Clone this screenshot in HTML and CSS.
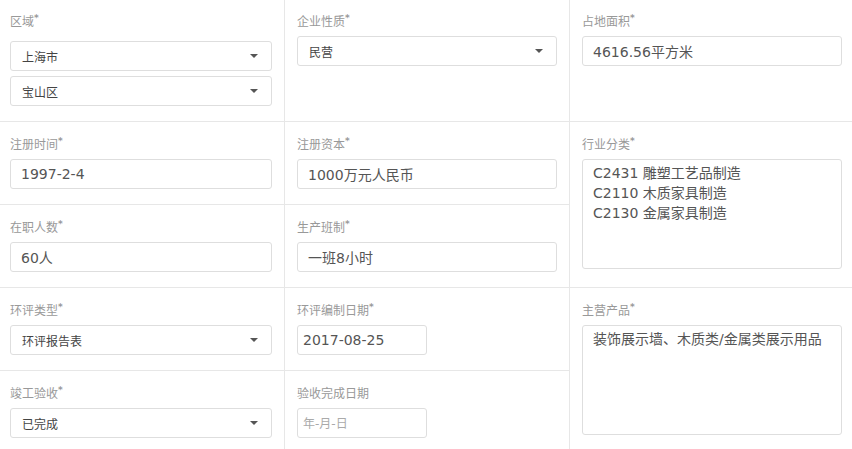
FILE: index.html
```html
<!DOCTYPE html>
<html lang="zh-CN">
<head>
    <meta charset="UTF-8">
    <meta name="viewport" content="width=device-width, initial-scale=1.0">
    <title>企业信息</title>
    <link rel="stylesheet" href="styles.css">
</head>
<body>

    <!-- Company info form -->
    <div class="form-grid">

        <div class="cell first-row col-left">
            <label class="label">区域<span class="req">*</span></label>
            <div class="select-stack">
                <div class="select"><span>上海市</span><svg class="caret" width="8" height="4" viewBox="0 0 8 4"><path d="M0 0H8L4 4Z"/></svg></div>
                <div class="select"><span>宝山区</span><svg class="caret" width="8" height="4" viewBox="0 0 8 4"><path d="M0 0H8L4 4Z"/></svg></div>
            </div>
        </div>

        <div class="cell first-row">
            <label class="label">企业性质<span class="req">*</span></label>
            <div class="select"><span>民营</span><svg class="caret" width="8" height="4" viewBox="0 0 8 4"><path d="M0 0H8L4 4Z"/></svg></div>
        </div>

        <div class="cell first-row col-right">
            <label class="label">占地面积<span class="req">*</span></label>
            <input class="input" type="text" value="4616.56平方米">
        </div>

        <div class="cell col-left">
            <label class="label">注册时间<span class="req">*</span></label>
            <input class="input" type="text" value="1997-2-4">
        </div>

        <div class="cell">
            <label class="label">注册资本<span class="req">*</span></label>
            <input class="input" type="text" value="1000万元人民币">
        </div>

        <div class="cell col-right tall">
            <label class="label">行业分类<span class="req">*</span></label>
            <textarea class="textarea">C2431 雕塑工艺品制造
C2110 木质家具制造
C2130 金属家具制造</textarea>
        </div>

        <div class="cell col-left">
            <label class="label">在职人数<span class="req">*</span></label>
            <input class="input" type="text" value="60人">
        </div>

        <div class="cell">
            <label class="label">生产班制<span class="req">*</span></label>
            <input class="input" type="text" value="一班8小时">
        </div>

        <div class="cell col-left">
            <label class="label">环评类型<span class="req">*</span></label>
            <div class="select"><span>环评报告表</span><svg class="caret" width="8" height="4" viewBox="0 0 8 4"><path d="M0 0H8L4 4Z"/></svg></div>
        </div>

        <div class="cell">
            <label class="label">环评编制日期<span class="req">*</span></label>
            <input class="input date" type="text" value="2017-08-25">
        </div>

        <div class="cell col-right tall">
            <label class="label">主营产品<span class="req">*</span></label>
            <textarea class="textarea">装饰展示墙、木质类/金属类展示用品</textarea>
        </div>

        <div class="cell col-left">
            <label class="label">竣工验收<span class="req">*</span></label>
            <div class="select"><span>已完成</span><svg class="caret" width="8" height="4" viewBox="0 0 8 4"><path d="M0 0H8L4 4Z"/></svg></div>
        </div>

        <div class="cell">
            <label class="label">验收完成日期</label>
            <input class="input date" type="text" placeholder="年-月-日">
        </div>

    </div>

</body>
</html>
```

FILE: styles.css
```css
* {
    box-sizing: border-box;
}

body {
    margin: 0;
    padding: 0;
    background-color: #fff;
    font-family: "DejaVu Sans", "Noto Sans CJK SC", sans-serif;
    overflow: hidden;
}

.form-grid {
    display: grid;
    grid-template-columns: 285px 285px 1fr;
    grid-template-rows: 122px repeat(4, 83px);
}

.cell {
    padding: 14px 12px 0;
    border-right: 1px solid #e7e7e7;
    border-bottom: 1px solid #e7e7e7;
}

.first-row {
    padding-top: 13px;
}

.col-left {
    padding-left: 10px;
}

.col-right {
    border-right: none;
    padding-right: 10px;
}

.tall {
    grid-row: span 2;
}

.label {
    display: block;
    font-size: 12px;
    line-height: 18px;
    color: #999;
    margin-bottom: 5px;
}

.req {
    font-size: 9px;
    line-height: 10px;
    vertical-align: top;
    font-weight: bold;
    color: #999;
}

.select-stack {
    margin-top: 10px;
    display: flex;
    flex-direction: column;
    gap: 5px;
}

.select {
    display: flex;
    align-items: center;
    justify-content: space-between;
    height: 30px;
    padding: 0 13px 0 11px;
    border: 1px solid #dedede;
    border-radius: 3px;
    font-size: 12px;
    color: #444;
    background-color: #fff;
}

.caret {
    fill: #555;
}

.input {
    display: block;
    width: 100%;
    height: 30px;
    padding: 0 10px;
    border: 1px solid #dedede;
    border-radius: 3px;
    font-family: inherit;
    font-size: 14px;
    color: #555;
    background-color: #fff;
    outline: none;
}

.input.date {
    width: 130px;
    padding: 0 5px;
}

.input::placeholder {
    font-size: 12px;
    color: #aaa;
}

.textarea {
    display: block;
    width: 100%;
    height: 110px;
    padding: 3px 10px;
    border: 1px solid #dedede;
    border-radius: 3px;
    font-family: inherit;
    font-size: 14px;
    line-height: 20px;
    color: #555;
    resize: none;
    outline: none;
    overflow: hidden;
}
```
